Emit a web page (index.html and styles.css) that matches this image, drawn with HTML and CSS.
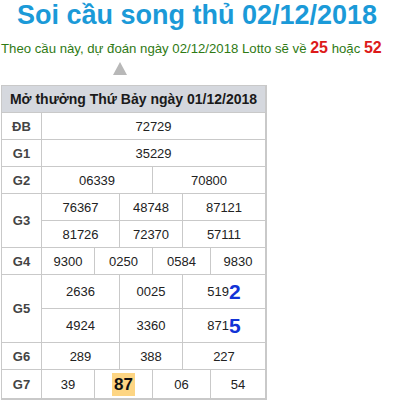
FILE: index.html
```html
<!DOCTYPE html>
<html lang="vi">
<head>
<meta charset="utf-8">
<title>Soi cầu song thủ 02/12/2018</title>
<link rel="stylesheet" href="styles.css">
</head>
<body>
<h1 class="title">Soi cầu song thủ 02/12/2018</h1>
<p class="predict">Theo cầu này, dự đoán ngày 02/12/2018 Lotto sẽ về <b class="hot">25</b> hoặc <b class="hot">52</b></p>
<div class="arrow"></div>
<div class="board">
  <div class="head">Mở thưởng Thứ Bảy ngày 01/12/2018</div>

  <div class="lbl">ĐB</div>
  <div class="c full">72729</div>

  <div class="lbl">G1</div>
  <div class="c full">35229</div>

  <div class="lbl">G2</div>
  <div class="c half-a">06339</div>
  <div class="c half-b">70800</div>

  <div class="lbl span2">G3</div>
  <div class="c third-a">76367</div>
  <div class="c third-b">48748</div>
  <div class="c third-c">87121</div>
  <div class="c third-a">81726</div>
  <div class="c third-b">72370</div>
  <div class="c third-c">57111</div>

  <div class="lbl">G4</div>
  <div class="c q-a">9300</div>
  <div class="c q-b">0250</div>
  <div class="c q-c">0584</div>
  <div class="c q-d">9830</div>

  <div class="lbl span2">G5</div>
  <div class="c third-a">2636</div>
  <div class="c third-b">0025</div>
  <div class="c third-c">519<b class="pick">2</b></div>
  <div class="c third-a">4924</div>
  <div class="c third-b">3360</div>
  <div class="c third-c">871<b class="pick">5</b></div>

  <div class="lbl">G6</div>
  <div class="c third-a">289</div>
  <div class="c third-b">388</div>
  <div class="c third-c">227</div>

  <div class="lbl">G7</div>
  <div class="c q-a">39</div>
  <div class="c q-b"><span class="mark">87</span></div>
  <div class="c q-c">06</div>
  <div class="c q-d">54</div>
</div>
</body>
</html>
```
FILE: styles.css
```css
html, body {
  margin: 0;
  padding: 0;
  background: #fff;
}
body {
  font-family: "Liberation Sans", Arial, sans-serif;
  color: #222;
}
.title {
  margin: 0;
  font-size: 27px;
  font-weight: bold;
  color: #1b9ad8;
  text-align: center;
  line-height: 31px;
}
.predict {
  margin: 7px 0 0 1px;
  font-size: 13.2px;
  line-height: 20px;
  height: 20px;
  color: #2f7a14;
  text-align: left;
  white-space: nowrap;
}
.hot {
  color: #dd1a1a;
  font-size: 16px;
}
.arrow {
  width: 0;
  height: 0;
  margin: 4px 0 0 113px;
  border-left: 7.5px solid transparent;
  border-right: 7.5px solid transparent;
  border-bottom: 13px solid #b8b8b8;
}
.board {
  display: grid;
  width: 264px;
  margin: 10px 0 0 1px;
  grid-template-columns: 39px 52px 24px 32px 29px 27px 54px;
  grid-template-rows: repeat(7, 26px) 33px 33px 26px 28px;
  gap: 1px;
  background: #c9c9c9;
  border: 1px solid #c9c9c9;
  border-bottom-width: 2px;
  font-size: 13px;
}
.board > div {
  background: #fff;
  display: flex;
  align-items: center;
  justify-content: center;
}
.board > .head {
  grid-column: 1 / -1;
  background: #d5d8de;
  font-weight: bold;
  font-size: 14px;
  color: #1a1a1a;
}
.lbl {
  grid-column: 1;
  font-weight: bold;
  color: #444;
}
.span2 { grid-row: span 2; }
.full { grid-column: 2 / 8; }
.half-a { grid-column: 2 / 5; }
.half-b { grid-column: 5 / 8; }
.third-a { grid-column: 2 / 4; }
.third-b { grid-column: 4 / 6; }
.third-c { grid-column: 6 / 8; }
.q-a { grid-column: 2 / 3; }
.q-b { grid-column: 3 / 5; }
.q-c { grid-column: 5 / 7; }
.q-d { grid-column: 7 / 8; }
.c .pick {
  color: #1233d6;
  font-size: 21px;
  line-height: 23px;
}
.mark {
  display: inline-block;
  background: #fdd583;
  font-weight: bold;
  font-size: 17px;
  line-height: 17px;
  padding: 3px 2px;
  color: #111;
}
```
